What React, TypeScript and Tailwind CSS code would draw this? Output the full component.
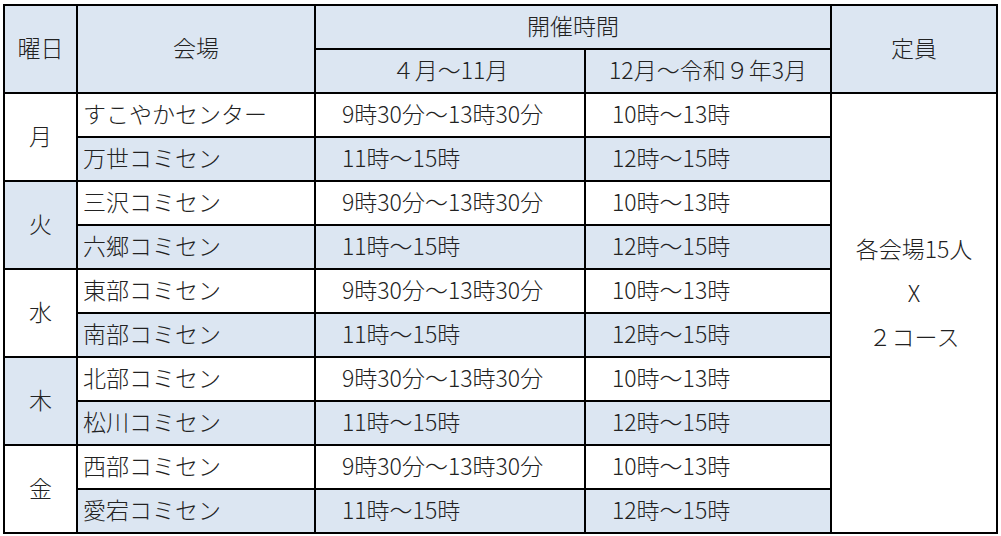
const BLUE = "bg-[#dce6f2]";

const days = [
  { day: "月", shade: false, venues: ["すこやかセンター", "万世コミセン"] },
  { day: "火", shade: true, venues: ["三沢コミセン", "六郷コミセン"] },
  { day: "水", shade: false, venues: ["東部コミセン", "南部コミセン"] },
  { day: "木", shade: true, venues: ["北部コミセン", "松川コミセン"] },
  { day: "金", shade: false, venues: ["西部コミセン", "愛宕コミセン"] },
];

const slots = [
  { a: "9時30分～13時30分", b: "10時～13時" },
  { a: "11時～15時", b: "12時～15時" },
];

export default function App() {
  return (
    <div
      className="w-[1001px] h-[536px] bg-white pt-[4px] pl-[3px] text-[23px] font-light text-[#222]"
      style={{ fontFamily: '"Noto Sans CJK JP", "Noto Sans", sans-serif' }}
    >
      <div className="grid w-[995px] grid-cols-[71px_236px_268px_244px_164px] grid-rows-[repeat(12,42px)] gap-[2px] border-2 border-black bg-black">
        {/* header */}
        <div className={`row-span-2 flex items-center justify-center pb-[3px] ${BLUE}`}>曜日</div>
        <div className={`row-span-2 flex items-center justify-center pb-[3px] ${BLUE}`}>会場</div>
        <div className={`col-span-2 flex items-center justify-center pb-[3px] ${BLUE}`}>開催時間</div>
        <div className={`row-span-2 flex items-center justify-center pb-[3px] ${BLUE}`}>定員</div>
        <div className={`flex items-center justify-center pb-[3px] ${BLUE}`}>４月～11月</div>
        <div className={`flex items-center justify-center pb-[3px] ${BLUE}`}>12月～令和９年3月</div>

        {days.map((d, di) => (
          <DayRows key={d.day} d={d} first={di === 0} />
        ))}
      </div>
    </div>
  );
}

function DayRows({ d, first }: { d: (typeof days)[number]; first: boolean }) {
  return (
    <>
      <div className={`row-span-2 flex items-center justify-center pb-[3px] ${d.shade ? BLUE : "bg-white"}`}>{d.day}</div>
      <div className="flex items-center bg-white pb-[3px] pl-[5px]">{d.venues[0]}</div>
      <div className="flex items-center bg-white pb-[3px] pl-[26px]">{slots[0].a}</div>
      <div className="flex items-center bg-white pb-[3px] pl-[26px]">{slots[0].b}</div>
      {first && (
        <div className="row-span-10 flex flex-col items-center justify-center bg-white pb-[42px] leading-[44px]">
          <div>各会場15人</div>
          <div>X</div>
          <div>２コース</div>
        </div>
      )}
      <div className={`flex items-center pb-[3px] pl-[5px] ${BLUE}`}>{d.venues[1]}</div>
      <div className={`flex items-center pb-[3px] pl-[26px] ${BLUE}`}>{slots[1].a}</div>
      <div className={`flex items-center pb-[3px] pl-[26px] ${BLUE}`}>{slots[1].b}</div>
    </>
  );
}
